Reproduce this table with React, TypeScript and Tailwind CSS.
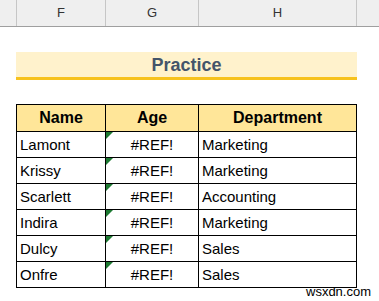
const rows = [
  { name: 'Lamont', dept: 'Marketing' },
  { name: 'Krissy', dept: 'Marketing' },
  { name: 'Scarlett', dept: 'Accounting' },
  { name: 'Indira', dept: 'Marketing' },
  { name: 'Dulcy', dept: 'Sales' },
  { name: 'Onfre', dept: 'Sales' },
];

export default function App() {
  return (
    <div className="relative w-[379px] h-[301px] bg-white overflow-hidden font-['Liberation_Sans',Arial,sans-serif] text-black">
      {/* column header strip */}
      <div className="grid grid-cols-[16px_89px_93px_158px_1fr] h-[27px] bg-[#efefef] border-b border-[#9f9f9f] text-[13px] text-[#333]">
        <div />
        <div className="border-l border-[#c6c6c6] flex items-center justify-center">F</div>
        <div className="border-l border-[#c6c6c6] flex items-center justify-center">G</div>
        <div className="border-l border-[#c6c6c6] flex items-center justify-center">H</div>
        <div className="border-l border-[#c6c6c6]" />
      </div>

      {/* title band */}
      <div className="ml-[16px] mt-[25px] w-[341px] h-[28px] bg-[#fff2cc] border-b-[3px] border-[#f7c21d] flex items-center justify-center">
        <span className="text-[18px] font-bold text-[#44546a] leading-none pt-[1px]">Practice</span>
      </div>

      {/* table */}
      <table className="ml-[16px] mt-[24px] border-collapse text-[15px]">
        <thead>
          <tr className="h-[27px] bg-[#ffe699]">
            <th className="w-[89px] border border-black font-bold text-[16px] p-0">Name</th>
            <th className="w-[93px] border border-black font-bold text-[16px] p-0">Age</th>
            <th className="w-[158px] border border-black font-bold text-[16px] p-0">Department</th>
          </tr>
        </thead>
        <tbody>
          {rows.map((r) => (
            <tr key={r.name} className="h-[26px]">
              <td className="border border-black px-[3px] py-0 leading-none">{r.name}</td>
              <td className="relative border border-black p-0 text-center leading-none">
                <svg className="absolute left-0 top-0" width="7" height="7" viewBox="0 0 7 7">
                  <polygon points="0,0 7,0 0,7" fill="#1d7a32" />
                </svg>
                #REF!
              </td>
              <td className="border border-black px-[3px] py-0 leading-none">{r.dept}</td>
            </tr>
          ))}
        </tbody>
      </table>

      <div className="absolute left-[306px] top-[285px] text-[13px] leading-none text-black">wsxdn.com</div>
    </div>
  );
}
